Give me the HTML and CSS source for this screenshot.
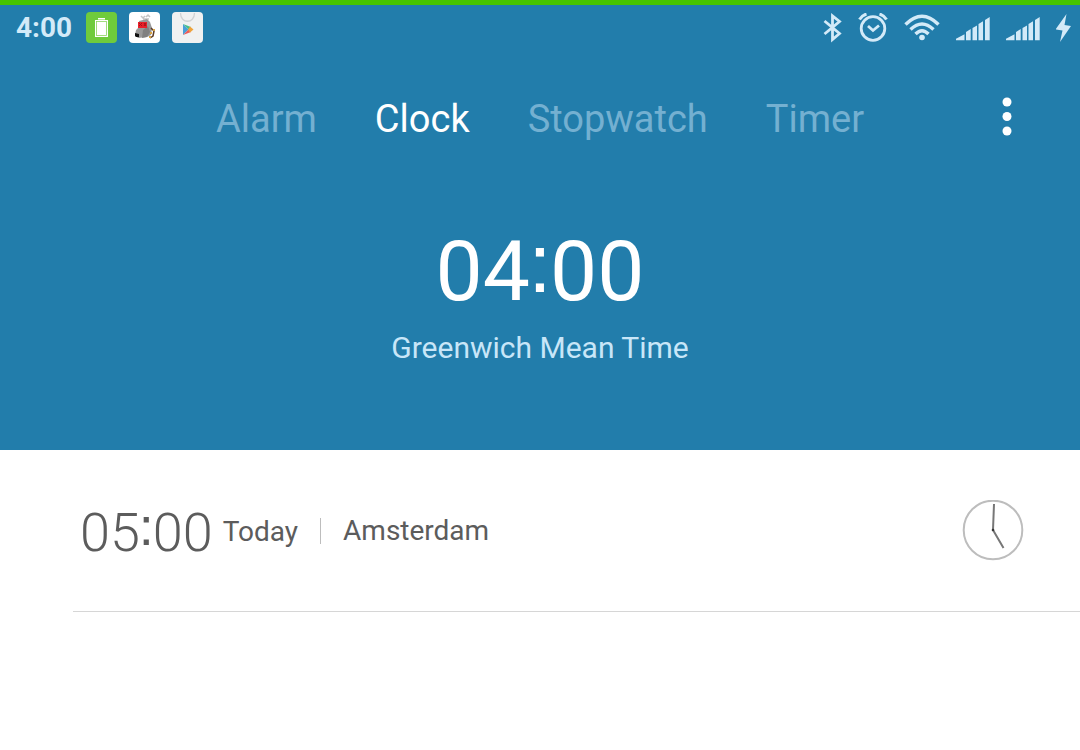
FILE: index.html
```html
<!DOCTYPE html>
<html lang="en">
<head>
<meta charset="utf-8">
<meta name="viewport" content="width=device-width, initial-scale=1">
<title>Clock</title>
<link rel="stylesheet" href="styles.css">
</head>
<body>
<header class="top">
  <div class="status">
    <div class="status-left">
      <span class="status-time">4:00</span>
      <svg class="app-icon" viewBox="0 0 31 31" aria-hidden="true">
        <rect width="31" height="31" rx="4" fill="#6fcb3c"/>
        <path d="M12 6h7v1.500h-7zM9 8h13v17H9z" fill="#fff"/>
        <rect x="10.500" y="9.500" width="10" height="14" fill="none" stroke="#8bd45f" stroke-width=".8"/>
      </svg>
      <svg class="app-icon" viewBox="0 0 31 31" aria-hidden="true">
        <rect width="31" height="31" rx="4" fill="#fff"/>
        <path d="M12 4l2 2 2-2M17 5l2-2 2 2M14 7h6" fill="none" stroke="#c4c4c4" stroke-width="1.500"/>
        <path d="M10 9l8-2 3 3 2 6-1 7-4 2-9 1-3-3 1-5 3-3z" fill="#999"/>
        <path d="M14 18l5-4 2 6-3 5-5 1z" fill="#808080"/>
        <path d="M9 10h9v6H9z" fill="#e8202a"/>
        <path d="M10 11l3 3M13 11l-3 3M15 11l2 3M17 11l-2 3" stroke="#a51318"/>
        <path d="M6 21l4 1v3H7l-1-1z" fill="#111"/>
        <path d="M22 16l3 3-1 5-3 2" fill="none" stroke="#5b3a26" stroke-width="1.500"/>
        <path d="M21 20h2v2h-2zM24 17h2v2h-2zM20 24h2v2h-2z" fill="#d9a441"/>
      </svg>
      <svg class="app-icon" viewBox="0 0 31 31" aria-hidden="true">
        <rect width="31" height="31" rx="4" fill="#f0f1f1"/>
        <path d="M8.500 1c0 11 14 11 14 0" fill="none" stroke="#d0d2d3" stroke-width="1.300"/>
        <path d="M11 12v11l5.500-5.500z" fill="#4a9fd8"/>
        <path d="M11 12l8 3-2.500 2.500z" fill="#45c08a"/>
        <path d="M11 23l8-3-2.500-2.500z" fill="#ed5a5a"/>
        <path d="M18 14.500l3.500 3-3.500 3-2-3z" fill="#efa33c"/>
      </svg>
    </div>
    <div class="status-right">
      <svg width="22" height="30" viewBox="0 0 22 30" aria-label="Bluetooth" role="img">
        <path d="M4.500 8l15 12.500-7 6V3l7 5.500L4.500 21" fill="none" stroke="currentColor" stroke-width="2.800"/>
      </svg>
      <svg width="30" height="30" viewBox="0 0 30 30" aria-label="Alarm set" role="img">
        <g fill="none" stroke="currentColor">
          <circle cx="15" cy="15.500" r="11.800" stroke-width="2.800"/>
          <path d="M10 13l5 4.500 6-5" stroke-width="2.800"/>
          <path d="M1.500 6.500C3 4 5 2 8.500 1M28.500 6.500C27 4 25 2 21.500 1" stroke-width="3"/>
        </g>
      </svg>
      <svg width="36" height="30" viewBox="0 0 36 30" aria-label="Wi-Fi" role="img">
        <g fill="none" stroke="currentColor" stroke-width="3.400">
          <path d="M1.500 11.500Q18-5 34.500 11.500M6.500 16.500Q18 5.500 29.500 16.500M11.500 21Q18 14.500 24.500 21"/>
        </g>
        <circle cx="18" cy="24.500" r="2.800" fill="currentColor"/>
      </svg>
      <svg width="34" height="30" viewBox="0 0 34 30" aria-label="Signal, SIM 1" role="img">
        <path d="M0 27.300v-1.500l8.500-4.500v6zM10 19l4.700-3v11.300H10zM16.500 15l4.500-2.500v14.800h-4.500zM22.500 11l4.500-2.800v19.100h-4.500zM29 7l4.700-3v23.300H29z" fill="currentColor"/>
      </svg>
      <svg width="34" height="30" viewBox="0 0 34 30" aria-label="Signal, SIM 2" role="img">
        <path d="M0 27.300v-1.500l8.500-4.500v6zM10 19l4.700-3v11.300H10zM16.500 15l4.500-2.500v14.800h-4.500zM22.500 11l4.500-2.800v19.100h-4.500zM29 7l4.700-3v23.300H29z" fill="currentColor"/>
      </svg>
      <svg width="16" height="30" viewBox="0 0 16 30" aria-label="Charging" role="img">
        <path d="M10.500 1L-.5 16.500l7 1L4 29l11-16-6.500-1z" fill="currentColor"/>
      </svg>
    </div>
  </div>
  <div class="toolbar">
    <nav class="tabs">
      <button class="tab" type="button">Alarm</button>
      <button class="tab tab-active" type="button" aria-current="page">Clock</button>
      <button class="tab" type="button">Stopwatch</button>
      <button class="tab" type="button">Timer</button>
    </nav>
    <button class="more" type="button" aria-label="More options">
      <svg width="10" height="44" viewBox="0 0 10 44" fill="currentColor">
        <circle cx="5" cy="5" r="4.500"/><circle cx="5" cy="19.500" r="4.500"/><circle cx="5" cy="34" r="4.500"/>
      </svg>
    </button>
  </div>
  <section class="now">
    <div class="now-time">04<span class="colon">:</span>00</div>
    <div class="now-zone">Greenwich Mean Time</div>
  </section>
</header>
<main>
  <ul class="cities">
    <li class="city">
      <span class="city-time">05<span class="colon">:</span>00</span>
      <span class="city-day">Today</span>
      <span class="city-name">Amsterdam</span>
      <svg class="dial" viewBox="0 0 62 62" aria-hidden="true">
        <circle cx="31" cy="30" r="29.300" fill="none" stroke="#bdbdbd" stroke-width="2"/>
        <path d="M31 30l1-26M31 30l10.500 18" fill="none" stroke="#777" stroke-width="2"/>
        <circle cx="31" cy="30" r="1.300" fill="#333"/>
      </svg>
    </li>
  </ul>
</main>
</body>
</html>
```
FILE: styles.css
```css
* {
  box-sizing: border-box;
}

body {
  margin: 0;
  min-height: 100vh;
  background: #fff;
  color: #5c5c5c;
  font-family: Roboto, sans-serif;
}

button {
  padding: 0;
  border: 0;
  background: none;
  font: inherit;
  color: inherit;
}

.top {
  border-top: 5px solid #46c400;
  padding-bottom: 82px;
  background: #227dab;
  color: #fff;
}

.status {
  display: flex;
  align-items: center;
  justify-content: space-between;
  height: 45px;
  padding: 0 8px 0 16px;
  color: #d3eaf8;
}

.status-left {
  display: flex;
  align-items: center;
  gap: 12px;
}

.status-time {
  margin-right: 2px;
  font-size: 28px;
  font-weight: 700;
  line-height: 32px;
}

.app-icon {
  width: 31px;
  height: 31px;
}

.status-right {
  display: flex;
  align-items: center;
  gap: 16px;
}

.toolbar {
  display: grid;
  grid-template-columns: 1fr auto 1fr;
  align-items: center;
  margin-top: 45px;
  padding: 0 68px;
}

.tabs {
  grid-column: 2;
  display: flex;
  gap: 58px;
}

.tab {
  font-size: 38px;
  line-height: 48px;
  color: #74b0d1;
}

.tab-active {
  color: #fff;
}

.more {
  justify-self: end;
  display: flex;
}

.now {
  margin-top: 81px;
  text-align: center;
}

.now-time {
  font-size: 84px;
  line-height: 96px;
}

.colon {
  margin: 0 -0.02em;
  font-family: "Liberation Sans", sans-serif;
  vertical-align: 0.1em;
  line-height: 0;
}

.now-zone {
  margin-top: 8px;
  font-size: 30px;
  line-height: 40px;
  color: #c8e6f8;
}

.cities {
  margin: 0;
  padding: 0 0 0 73px;
  list-style: none;
}

.city {
  display: flex;
  align-items: center;
  height: 162px;
  padding: 1px 56px 0 7px;
  border-bottom: 1px solid #d6d6d6;
  font-size: 28px;
}

.city-time {
  margin-right: 10px;
  padding-top: 3px;
  font-size: 54px;
  font-weight: 350;
  line-height: 64px;
}

.city-name {
  margin-left: 22px;
  padding-left: 22px;
  border-left: 1px solid #bdbdbd;
  line-height: 26px;
}

.dial {
  width: 62px;
  height: 62px;
  margin-left: auto;
}
```
